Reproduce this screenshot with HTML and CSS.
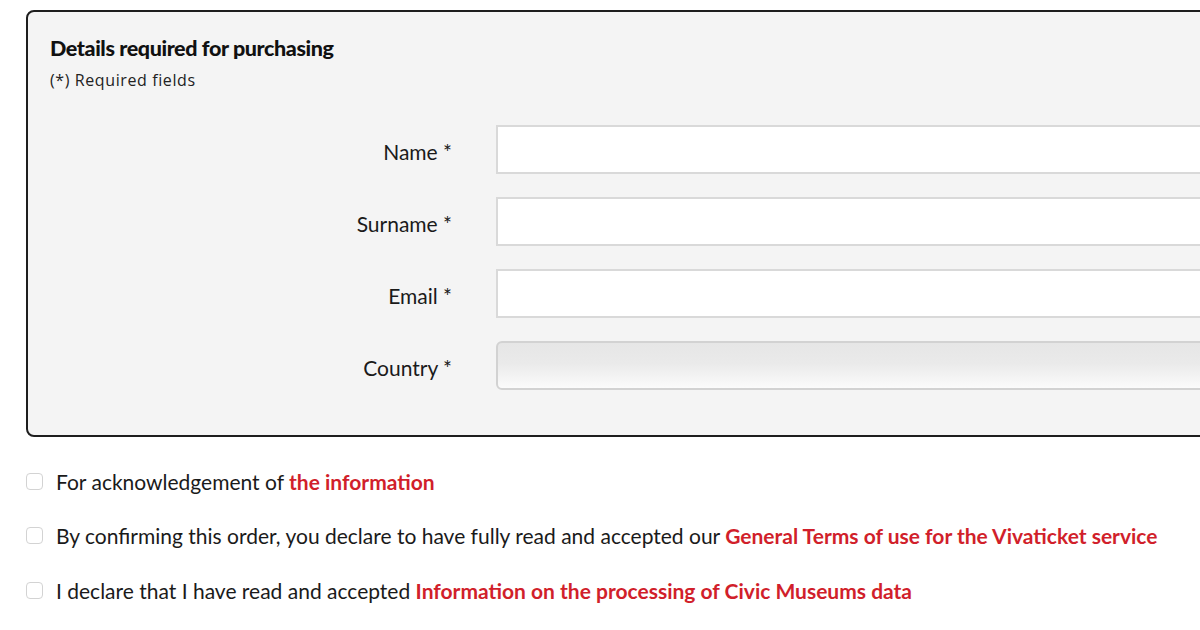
FILE: index.html
```html
<!DOCTYPE html>
<html lang="en">
<head>
<meta charset="utf-8">
<title>Details required for purchasing</title>
<link rel="stylesheet" href="styles.css">
</head>
<body>
<div class="page">
  <section class="panel">
    <h2 class="panel-title">Details required for purchasing</h2>
    <p class="panel-note">(*) Required fields</p>
    <div class="form-grid">
      <label class="field-label" for="f-name">Name *</label>
      <input class="field-input" id="f-name" type="text">
      <label class="field-label" for="f-surname">Surname *</label>
      <input class="field-input" id="f-surname" type="text">
      <label class="field-label" for="f-email">Email *</label>
      <input class="field-input" id="f-email" type="text">
      <label class="field-label" for="f-country">Country *</label>
      <div class="field-select" id="f-country"></div>
    </div>
  </section>
  <ul class="consents">
    <li class="consent"><span class="check"></span><span class="consent-text">For acknowledgement of <a class="red-link">the information</a></span></li>
    <li class="consent"><span class="check"></span><span class="consent-text">By confirming this order, you declare to have fully read and accepted our <a class="red-link">General Terms of use for the Vivaticket service</a></span></li>
    <li class="consent"><span class="check"></span><span class="consent-text">I declare that I have read and accepted <a class="red-link">Information on the processing of Civic Museums data</a></span></li>
  </ul>
</div>
</body>
</html>
```
FILE: styles.css
```css
html, body {
  margin: 0;
  padding: 0;
  background: #ffffff;
  overflow: hidden;
}
body {
  font-family: "Lato", "Noto Sans", sans-serif;
  color: #1a1a1a;
}
.page {
  padding: 10px 0 0 26px;
  width: 1174px;
  overflow: hidden;
}
.panel {
  box-sizing: border-box;
  width: 1260px;
  height: 427px;
  background: #f4f4f4;
  border: 2px solid #1e1e1e;
  border-radius: 8px;
  padding: 22px 0 0 22px;
}
.panel-title {
  margin: 0;
  font-size: 21.5px;
  font-weight: 900;
  line-height: 28px;
  color: #111;
  letter-spacing: -0.4px;
}
.panel-note {
  margin: 9px 0 0 0;
  font-family: "Open Sans", sans-serif;
  font-size: 16px;
  letter-spacing: 0.6px;
  line-height: 18px;
  color: #222;
}
.form-grid {
  display: grid;
  grid-template-columns: 402px 1fr;
  column-gap: 44px;
  row-gap: 23px;
  margin-top: 35.5px;
  align-items: center;
}
.field-label {
  text-align: right;
  font-size: 21px;
  color: #1a1a1a;
  padding-top: 4px;
}
.field-input {
  box-sizing: border-box;
  height: 49px;
  width: 100%;
  margin: 0;
  background: #fff;
  border: 2px solid #d9d9d9;
  border-radius: 0;
  outline: none;
}
.field-select {
  box-sizing: border-box;
  height: 49px;
  border: 2px solid #d2d2d2;
  border-radius: 6px;
  background: linear-gradient(#e6e6e6, #eaeaea 45%, #fbfbfb);
}
.consents {
  list-style: none;
  margin: 26px 0 0 0;
  padding: 0;
}
.consent {
  display: flex;
  align-items: center;
  height: 36px;
  margin-bottom: 18.5px;
}
.check {
  box-sizing: border-box;
  width: 17px;
  height: 17px;
  border: 1.5px solid #d3d3d3;
  border-radius: 4px;
  background: #fff;
  flex: none;
  margin-right: 13px;
}
.consent-text {
  font-size: 21px;
  color: #1a1a1a;
  white-space: nowrap;
}
.red-link {
  color: #d11f2b;
  font-weight: 700;
  text-decoration: none;
}
```
